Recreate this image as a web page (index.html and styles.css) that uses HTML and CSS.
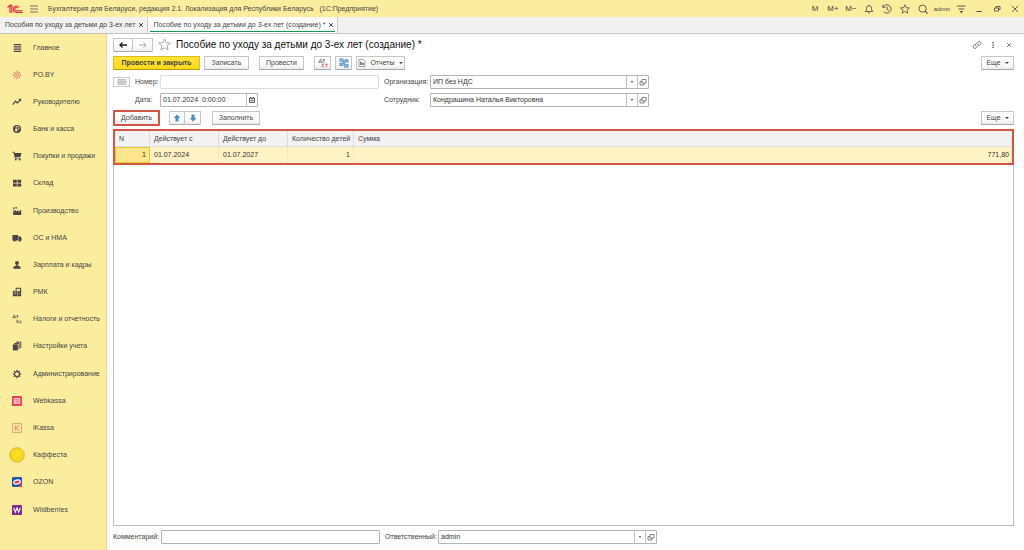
FILE: index.html
```html
<!DOCTYPE html>
<html lang="ru">
<head>
<meta charset="utf-8">
<title>Пособие по уходу за детьми до 3-ех лет (создание)</title>
<link rel="stylesheet" href="styles.css">
</head>
<body>
<svg class="defs" aria-hidden="true">
  <symbol id="open" viewBox="0 0 8 8"><path d="M3 1.500h4v3.500H3zM5 5v2H1V3.500h2" fill="none" stroke="#666" stroke-width=".8"/></symbol>
  <symbol id="close" viewBox="0 0 8 8"><path d="M1.500 1.500l5 5M6.500 1.500l-5 5" fill="none" stroke="currentColor" stroke-width="1.300"/></symbol>
  <symbol id="star" viewBox="0 0 12 12"><path d="M6 .9l1.500 3.500 3.900.3-3 2.500.9 3.800L6 9 2.700 11l.9-3.800-3-2.500 3.900-.3z" fill="none" stroke="currentColor" stroke-width=".9"/></symbol>
</svg>
<header class="topbar">
  <svg class="logo" viewBox="0 0 16 10"><path d="M.5 3.500L3 1.300V9M4.800 9V1.300L3 2" fill="none" stroke="#dc3444" stroke-width="1.200"/><path d="M12 3.300A3.200 3.200 0 1 0 9.300 8.400h6.200M10.500 4A1.600 1.600 0 1 0 9.300 6.700h6.200" fill="none" stroke="#dc3444" stroke-width="1.100"/></svg>
  <button class="icon-btn" aria-label="Меню"><svg class="i8" viewBox="0 0 8 8"><path d="M0 1h8M0 4h8M0 7h8" stroke="#666" stroke-width=".9"/></svg></button>
  <span class="app-title">Бухгалтерия для Беларуси, редакция 2.1. Локализация для Республики Беларусь &nbsp; (1С:Предприятие)</span>
  <nav class="top-tools" aria-label="Инструменты">
    <button class="icon-btn">M</button><button class="icon-btn">M+</button><button class="icon-btn">M−</button>
    <button class="icon-btn" aria-label="Уведомления"><svg class="i10" viewBox="0 0 12 12"><path d="M1.500 9h9L9 7V5a3 3 0 0 0-6 0v2zM5 10.700h2M6 1v1" fill="none" stroke="#444"/></svg></button>
    <button class="icon-btn" aria-label="История"><svg class="i10" viewBox="0 0 12 12"><path d="M1.500 3.500A5 5 0 1 1 2 9.200M1 1v3h3M6 3v3.500L8.500 8" fill="none" stroke="#444"/></svg></button>
    <button class="icon-btn" aria-label="Избранное"><svg class="i10"><use href="#star"/></svg></button>
    <button class="icon-btn" aria-label="Поиск"><svg class="i10" viewBox="0 0 12 12"><circle cx="5.500" cy="5.500" r="4.300" fill="none" stroke="#444"/><path d="M8.500 8.500l3 3" stroke="#444" stroke-width="1.300"/></svg></button>
    <button class="icon-btn user">admin</button>
    <button class="icon-btn" aria-label="Настройки"><svg class="i10" viewBox="0 0 12 12"><path d="M1 2.500h10.500M3 6h7" stroke="#444"/><path d="M4.500 8.500h4l-2 2.500z" fill="#444"/></svg></button>
    <button class="icon-btn" aria-label="Свернуть"><svg class="i8" viewBox="0 0 8 8"><path d="M1.500 6.500h5" stroke="#444"/></svg></button>
    <button class="icon-btn" aria-label="Развернуть"><svg class="i8" viewBox="0 0 8 8"><path d="M1.500 3h4v3h-4zM3 3V1.500h4v3H5.500" fill="none" stroke="#444" stroke-width=".8"/></svg></button>
    <button class="icon-btn" aria-label="Закрыть"><svg class="i8" viewBox="0 0 8 8"><path d="M1 1l6 6M7 1L1 7" stroke="#444" stroke-width=".8"/></svg></button>
  </nav>
</header>
<nav class="tabs" aria-label="Открытые окна">
  <div class="tab"><a href="#list">Пособия по уходу за детьми до 3-ех лет</a><button class="icon-btn" aria-label="Закрыть вкладку"><svg class="i6"><use href="#close"/></svg></button></div>
  <div class="tab active"><a href="#doc">Пособие по уходу за детьми до 3-ех лет (создание) *</a><button class="icon-btn" aria-label="Закрыть вкладку"><svg class="i6"><use href="#close"/></svg></button></div>
</nav>
<div class="workspace">
  <nav class="sidebar" aria-label="Разделы">
    <a href="#"><svg viewBox="0 0 12 12"><path d="M2 2h9M2 4.700h9M2 7.400h9M2 10h9" stroke="#484448" stroke-width="1.400"/></svg>Главное</a>
    <a href="#"><svg viewBox="0 0 12 12"><path d="M6 1v3M6 8v3M1 6h3M8 6h3M2.500 2.500l2 2M7.500 7.500l2 2M9.500 2.500l-2 2M4.500 7.500l-2 2" stroke="#e44c50" stroke-width="1.100"/><circle cx="6" cy="6" r="1" fill="#e44c50"/></svg>PO.BY</a>
    <a href="#"><svg viewBox="0 0 12 12"><path d="M1 9l3-4 2.500 2L10 3.500" fill="none" stroke="#484448" stroke-width="1.500"/><path d="M7.500 2H11v3.500z" fill="#484448"/></svg>Руководителю</a>
    <a href="#"><svg viewBox="0 0 12 12"><circle cx="6" cy="6" r="4.800" fill="#484448"/><path d="M5 9.500V3h1.800a1.700 1.700 0 0 1 0 3.500H3.500M3.500 8h3.200" fill="none" stroke="#fbed9e"/></svg>Банк и касса</a>
    <a href="#"><svg viewBox="0 0 12 12"><path d="M.5 1h2.300L3.300 2.500H11.500L10 7.300H4.200l.2.700H10.300v1H3.500L2 2H.5z" fill="#484448"/><circle cx="4.500" cy="10.300" r="1.200" fill="#484448"/><circle cx="9.200" cy="10.300" r="1.200" fill="#484448"/></svg>Покупки и продажи</a>
    <a href="#"><svg viewBox="0 0 12 12"><path d="M1.200 2h4.500v3.700H1.200zM6.500 2H11v3.700H6.500zM1.200 6.500h4.500v3.700H1.200zM6.500 6.500H11v3.700H6.500z" fill="#484448"/></svg>Склад</a>
    <a href="#"><svg viewBox="0 0 12 12"><path d="M1.500 10.800V6l3-1.200V7l3-2.300v2.500L11 4.500v6.300zM1.500 4.500V1.500h1.300V4zM4 1.500h2V3H4z" fill="#484448"/></svg>Производство</a>
    <a href="#"><svg viewBox="0 0 12 12"><path d="M.5 2.500h6.800V9H.5zM7.800 4h2.200l1.500 2.300V9H7.800z" fill="#484448"/><circle cx="3" cy="9" r="1.400" fill="#484448"/><circle cx="9.300" cy="9" r="1.400" fill="#484448"/></svg>ОС и НМА</a>
    <a href="#"><svg viewBox="0 0 12 12"><circle cx="6" cy="3.500" r="2.300" fill="#484448"/><path d="M1.500 10.500c0-2.500 1-3.500 3.500-3.500V5.500h2V7c2.500 0 3.500 1 3.500 3.500z" fill="#484448"/></svg>Зарплата и кадры</a>
    <a href="#"><svg viewBox="0 0 12 12"><path d="M1 4.500h5.500V11H1zM7 5h4v6H7z" fill="#484448"/><path d="M5 4V1.500h5.300V6" fill="none" stroke="#484448" stroke-width="1.300"/><path d="M2.200 6h3M2.200 8h3M8 8h2" stroke="#fbed9e" stroke-width=".7"/></svg>РМК</a>
    <a href="#"><svg viewBox="0 0 12 12"><path d="M1.500 4l1.200-3L3.900 4M1 5V4h3.500v1M5 2h3M6.500 2v3M6 7v4M8 7.500L6 9l2 2M9 8l2.200 3M11.200 8L9 11" fill="none" stroke="#59534f" stroke-width=".9"/></svg>Налоги и отчетность</a>
    <a href="#"><svg viewBox="0 0 12 12"><path d="M1 4h6v7.300H1z" fill="#484448"/><path d="M2.800 2.900h5.600v7M4.800 1.300h5.700V8.500" fill="none" stroke="#484448" stroke-width="1.200"/></svg>Настройки учета</a>
    <a href="#"><svg viewBox="0 0 12 12"><circle cx="6" cy="6" r="2.900" fill="none" stroke="#484448" stroke-width="1.300"/><path d="M6 1v2M6 9v2M1 6h2M9 6h2M2.500 2.500L4 4M8 8l1.500 1.500M9.500 2.500L8 4M4 8L2.500 9.500" stroke="#484448" stroke-width="1.500"/></svg>Администрирование</a>
    <a href="#"><svg viewBox="0 0 12 12"><rect width="12" height="12" rx="1" fill="#ef405c"/><path d="M2 2.500h8v7H2z" fill="#fbc8c8"/><path d="M2.500 4.500h7M4.500 6.500h5M5 8.500h4" stroke="#ef405c" stroke-width=".7"/></svg>Webkassa</a>
    <a href="#"><svg viewBox="0 0 12 12"><rect x=".5" y=".5" width="11" height="11" rx=".8" fill="#fbe29b" stroke="#d98b66" stroke-width=".9"/><path d="M4 3v6M8.500 3L4.500 6l4 3" fill="none" stroke="#d9785c" stroke-width=".9"/></svg>iKassa</a>
    <a href="#"><svg class="coin" viewBox="0 0 16 16"><circle cx="8" cy="8" r="7.300" fill="#fddf20" stroke="#c9a92e" stroke-width=".8"/><circle cx="8" cy="8" r="5" fill="none" stroke="#dcb91f" stroke-width=".7" stroke-dasharray="1.500 1"/></svg>Каффеста</a>
    <a href="#"><svg viewBox="0 0 12 12"><rect width="12" height="12" rx="1.500" fill="#2357b5"/><path d="M7 12Q11 9 12 5v5.500q0 1.500-1.500 1.500z" fill="#ef315a"/><ellipse cx="6" cy="6" rx="4" ry="2.300" transform="rotate(-15 6 6)" fill="#ef315a" stroke="#fff" stroke-width="1.500"/></svg>OZON</a>
    <a href="#"><svg viewBox="0 0 12 12"><rect width="12" height="12" rx="1" fill="#852c91"/><path d="M2 3.500L4 8.500l2-5 2 5 2-5" fill="none" stroke="#fff" stroke-width="1.300"/></svg>Wildberries</a>
  </nav>
  <main class="doc">
    <div class="doc-head">
      <div class="group">
        <button class="btn" aria-label="Назад"><svg class="i8" viewBox="0 0 8 8"><path d="M8 4H1M3.500 1.500L1 4l2.500 2.500" fill="none" stroke="#222" stroke-width="1.300"/></svg></button>
        <button class="btn" aria-label="Вперед"><svg class="i8" viewBox="0 0 8 8"><path d="M0 4h7M4.500 1.500L7 4 4.500 6.500" fill="none" stroke="#aaa"/></svg></button>
      </div>
      <button class="icon-btn fav" aria-label="В избранное"><svg class="i12"><use href="#star"/></svg></button>
      <h1>Пособие по уходу за детьми до 3-ех лет (создание) *</h1>
      <div class="doc-tools">
        <button class="icon-btn" aria-label="Ссылка"><svg class="i10" viewBox="0 0 12 12"><path d="M5 7.500a2 2 0 0 1 0-3L7 2.500a2 2 0 0 1 3 3L8.500 7M7 4.500a2 2 0 0 1 0 3L5 9.500a2 2 0 0 1-3-3L3.500 5" fill="none" stroke="#666"/></svg></button>
        <button class="icon-btn" aria-label="Действия"><svg class="i8" viewBox="0 0 8 8"><path d="M3.400 1h1.300v1.300H3.400zM3.400 3.400h1.300v1.300H3.400zM3.400 5.800h1.300v1.300H3.400z" fill="#444"/></svg></button>
        <button class="icon-btn" aria-label="Закрыть"><svg class="i8" viewBox="0 0 8 8"><path d="M2 2l4 4M6 2L2 6" stroke="#666" stroke-width=".8"/></svg></button>
      </div>
    </div>
    <div class="commands">
      <button class="btn primary">Провести и закрыть</button>
      <button class="btn save">Записать</button>
      <button class="btn post">Провести</button>
      <button class="btn square" aria-label="Дт Кт"><svg class="i10" viewBox="0 0 12 12"><path d="M1.500 4.500l1.500-3 1.500 3M1 6V4.800h4V6M5.500 2h3M7 2v3.500" fill="none" stroke="#557" stroke-width=".9"/><path d="M5 6.500V11M7.500 6.500L5.500 9l2 2M8.500 7.500H12M10.200 7.500V11" fill="none" stroke="#d25547" stroke-width=".9"/></svg></button>
      <button class="btn square" aria-label="Структура"><svg class="i10" viewBox="0 0 12 12"><path d="M1 1h4v3H1zM7 2h4v3H7zM1 6h4v3H1zM6.500 7.500h4.500V11H6.500z" fill="#8fbbdc" stroke="#4b84b5" stroke-width=".8"/><path d="M5 3l2 5M5 7l2-3" stroke="#4b84b5"/></svg></button>
      <button class="btn reports"><svg class="i8" viewBox="0 0 8 8"><path d="M1 .5h4.500l1.500 1.500v5.500H1z" fill="#fff" stroke="#777" stroke-width=".7"/><path d="M2.700 2.500v3.500" stroke="#456"/><path d="M4 3v3" stroke="#d33"/><path d="M5.300 4v2" stroke="#456"/></svg>Отчеты<span class="caret"></span></button>
      <button class="btn more">Еще<span class="caret"></span></button>
    </div>
    <form class="fields">
      <button type="button" class="keys" aria-label="Ввод номера"><svg viewBox="0 0 10 6"><path d="M1 .5h8v5H1zM1 2.200h8M1 3.800h8M3 .5v5M5 .5v5M7 .5v5" fill="none" stroke="#aaa" stroke-width=".7"/></svg></button>
      <label for="num">Номер:</label>
      <input id="num" class="field faint" type="text">
      <label class="second" for="org">Организация:</label>
      <div class="field"><input id="org" type="text" value="ИП без НДС"><button type="button" aria-label="Выбрать"><span class="caret"></span></button><button type="button" aria-label="Открыть"><svg class="i8"><use href="#open"/></svg></button></div>
      <span></span>
      <label for="date">Дата:</label>
      <div class="field date"><input id="date" type="text" value="01.07.2024  0:00:00"><button type="button" aria-label="Календарь"><svg class="i8" viewBox="0 0 8 8"><path d="M1.500 2h5v4.500h-5zM2.500 1v1.500M5.500 1v1.500" fill="none" stroke="#555" stroke-width=".9"/><path d="M1.500 2.500h5M2 4.500h4M4 3v3" stroke="#555" stroke-width=".6"/></svg></button></div>
      <label class="second" for="emp">Сотрудник:</label>
      <div class="field"><input id="emp" type="text" value="Кондрашина Наталья Викторовна"><button type="button" aria-label="Выбрать"><span class="caret"></span></button><button type="button" aria-label="Открыть"><svg class="i8"><use href="#open"/></svg></button></div>
    </form>
    <div class="commands table-tools">
      <button class="btn add">Добавить</button>
      <div class="group arrows">
        <button class="btn" aria-label="Вверх"><svg class="i8" viewBox="0 0 8 8"><path d="M4 .5l3.500 3.500H5.500v3.500H2.500V4H.5z" fill="#4b91c6"/></svg></button>
        <button class="btn" aria-label="Вниз"><svg class="i8" viewBox="0 0 8 8"><path d="M4 7.500L.5 4h2V.5h3V4h2z" fill="#4b91c6"/></svg></button>
      </div>
      <button class="btn fill">Заполнить</button>
      <button class="btn more">Еще<span class="caret"></span></button>
    </div>
    <div class="grid">
      <table>
        <colgroup><col class="c-n"><col class="c-date"><col class="c-date"><col class="c-kids"><col></colgroup>
        <thead><tr><th>N</th><th>Действует с</th><th>Действует до</th><th>Количество детей</th><th>Сумма</th></tr></thead>
        <tbody><tr><td class="num current">1</td><td>01.07.2024</td><td>01.07.2027</td><td class="num">1</td><td class="num">771,80</td></tr></tbody>
      </table>
    </div>
    <form class="footer">
      <label for="note">Комментарий:</label>
      <input id="note" class="field" type="text">
      <label class="second" for="resp">Ответственный:</label>
      <div class="field"><input id="resp" type="text" value="admin"><button type="button" aria-label="Выбрать"><span class="caret"></span></button><button type="button" aria-label="Открыть"><svg class="i8"><use href="#open"/></svg></button></div>
    </form>
  </main>
</div>
</body>
</html>
```
FILE: styles.css
```css
* { box-sizing: border-box; }
body {
  margin: 0;
  min-height: 100vh;
  display: flex;
  flex-direction: column;
  font: 7px/10px "Liberation Sans", Arial, sans-serif;
  color: #444;
  background: #fff;
}
button, input { font: inherit; color: inherit; margin: 0; padding: 0; }
a { color: inherit; text-decoration: none; }
svg { display: block; flex: none; }
.defs { position: absolute; width: 0; height: 0; }
.i6 { width: 6px; height: 6px; }
.i8 { width: 8px; height: 8px; }
.i10 { width: 10px; height: 10px; }
.i12 { width: 13px; height: 13px; }
.icon-btn {
  border: 0;
  background: none;
  display: flex;
  align-items: center;
  justify-content: center;
}

.topbar {
  height: 17px;
  display: flex;
  align-items: center;
  padding-left: 7px;
  background: #fbed9e;
}
.logo { width: 16px; height: 10px; margin-right: 7px; }
.app-title { margin-left: 10px; white-space: nowrap; }
.top-tools { display: flex; margin-left: auto; color: #444; }
.top-tools .icon-btn { width: 18px; font-size: 8px; }
.top-tools .user { width: 20px; font-size: 6px; }

.tabs {
  height: 17px;
  display: flex;
  background: #f1f1f1;
  border-bottom: 1px solid #c4c4c4;
}
.tab {
  display: flex;
  align-items: center;
  gap: 3px;
  padding: 0 3px 0 5px;
  border-right: 1px solid #c9c9c9;
  white-space: nowrap;
}
.tab.active {
  background: linear-gradient(#159957, #159957) 2px calc(100% - 1px) / calc(100% - 4px) 1px no-repeat #fff;
}

.workspace { flex: 1; display: flex; }
.sidebar {
  width: 107px;
  flex: none;
  display: flex;
  flex-direction: column;
  padding-bottom: 27px;
  background: #fbed9e;
  border-right: 1px solid #ead98c;
}
.sidebar a {
  flex: 1;
  display: grid;
  grid-template-columns: 33px 1fr;
  align-items: center;
  white-space: nowrap;
}
.sidebar svg { width: 10px; height: 10px; justify-self: center; }
.sidebar .coin { width: 16px; height: 16px; }

.doc {
  flex: 1;
  min-width: 0;
  display: flex;
  flex-direction: column;
  padding: 3px 10px 6px 6px;
}
.doc-head { display: flex; align-items: center; height: 15px; }
.group { display: flex; }
.btn {
  height: 14px;
  display: flex;
  align-items: center;
  justify-content: center;
  gap: 4px;
  border: 1px solid #c6c6c6;
  border-bottom-color: #aaa;
  border-radius: 1px;
  background: linear-gradient(#fff 50%, #ececec);
  white-space: nowrap;
}
.group .btn { width: 20px; }
.group .btn + .btn { border-left: 0; }
.fav { margin: 0 5px; color: #aaa; }
h1 { margin: 0; font-size: 10px; font-weight: 400; line-height: 12px; color: #111; white-space: nowrap; }
.doc-tools { display: flex; gap: 6px; margin-left: auto; }
.doc-tools .icon-btn { width: 10px; }

.commands { display: flex; margin-top: 4px; }
.primary {
  width: 87px;
  margin-right: 4px;
  font-weight: 700;
  background: linear-gradient(#ffe437, #fbd91c);
  border-color: #dcbc18;
  border-bottom-color: #b59a14;
}
.save { width: 45px; margin-right: 10px; }
.post { width: 45px; margin-right: 10px; }
.square { width: 17px; margin-right: 4px; }
.reports { width: 49px; }
.more { width: 33px; margin-left: auto; }
.caret { border: 2px solid transparent; border-top-color: #444; border-bottom: 0; }

.fields {
  display: grid;
  grid-template-columns: 22px 25px 219px 51px 219px;
  row-gap: 4px;
  align-items: center;
  margin-top: 5px;
}
.keys {
  width: 17px;
  height: 10px;
  display: flex;
  align-items: center;
  justify-content: center;
  border: 1px solid #ccc;
  background: #fff;
}
.keys svg { width: 10px; height: 6px; }
.second { padding-left: 5px; }
label { white-space: nowrap; }
.field {
  width: 100%;
  height: 14px;
  display: flex;
  border: 1px solid #b4b4b4;
  border-radius: 1px;
  background: #fff;
  color: #333;
}
.field.faint { border-color: #ddd; }
.field.date { width: 98px; }
.field input {
  flex: 1;
  min-width: 0;
  padding: 0 2px;
  border: 0;
  background: none;
  white-space: pre;
}
.field button {
  width: 11px;
  display: flex;
  align-items: center;
  justify-content: center;
  border: 0;
  border-left: 1px solid #c4c4c4;
  background: none;
}
.field .caret { border-width: 1px; border-bottom-width: 0; border-top-width: 2px; }

.table-tools { align-items: center; margin-top: 3px; }
.table-tools .add { width: 47px; height: 16px; border: 2px solid #d65548; }
.arrows { margin: 0 11px 0 9px; }
.arrows .btn { width: 16px; }
.fill { width: 48px; }

.grid { flex: 1; margin-top: 3px; border: 1px solid #bfbfbf; border-top: 0; }
table {
  width: calc(100% + 2px);
  margin: 0 -1px;
  table-layout: fixed;
  border-collapse: separate;
  border-spacing: 0;
  border: 2px solid #d65548;
}
.c-n { width: 35px; }
.c-date { width: 69px; }
.c-kids { width: 66px; }
th, td { height: 16px; padding: 0 3px 0 4px; text-align: left; font-weight: 400; white-space: nowrap; }
th { background: #f2f2f2; border-right: 1px solid #dcdcdc; border-bottom: 1px solid #dcdcdc; }
th:last-child { border-right: 0; }
td { background: #fff2c5; color: #333; border-right: 1px solid #f5e8b9; }
td:last-child { border-right: 0; }
td.num { text-align: right; }
td.current { background: #ffe58c; border: 1px solid #e9c92b; }

.footer {
  display: grid;
  grid-template-columns: 48px 219px 58px 219px;
  align-items: center;
  margin-top: 4px;
}
```
